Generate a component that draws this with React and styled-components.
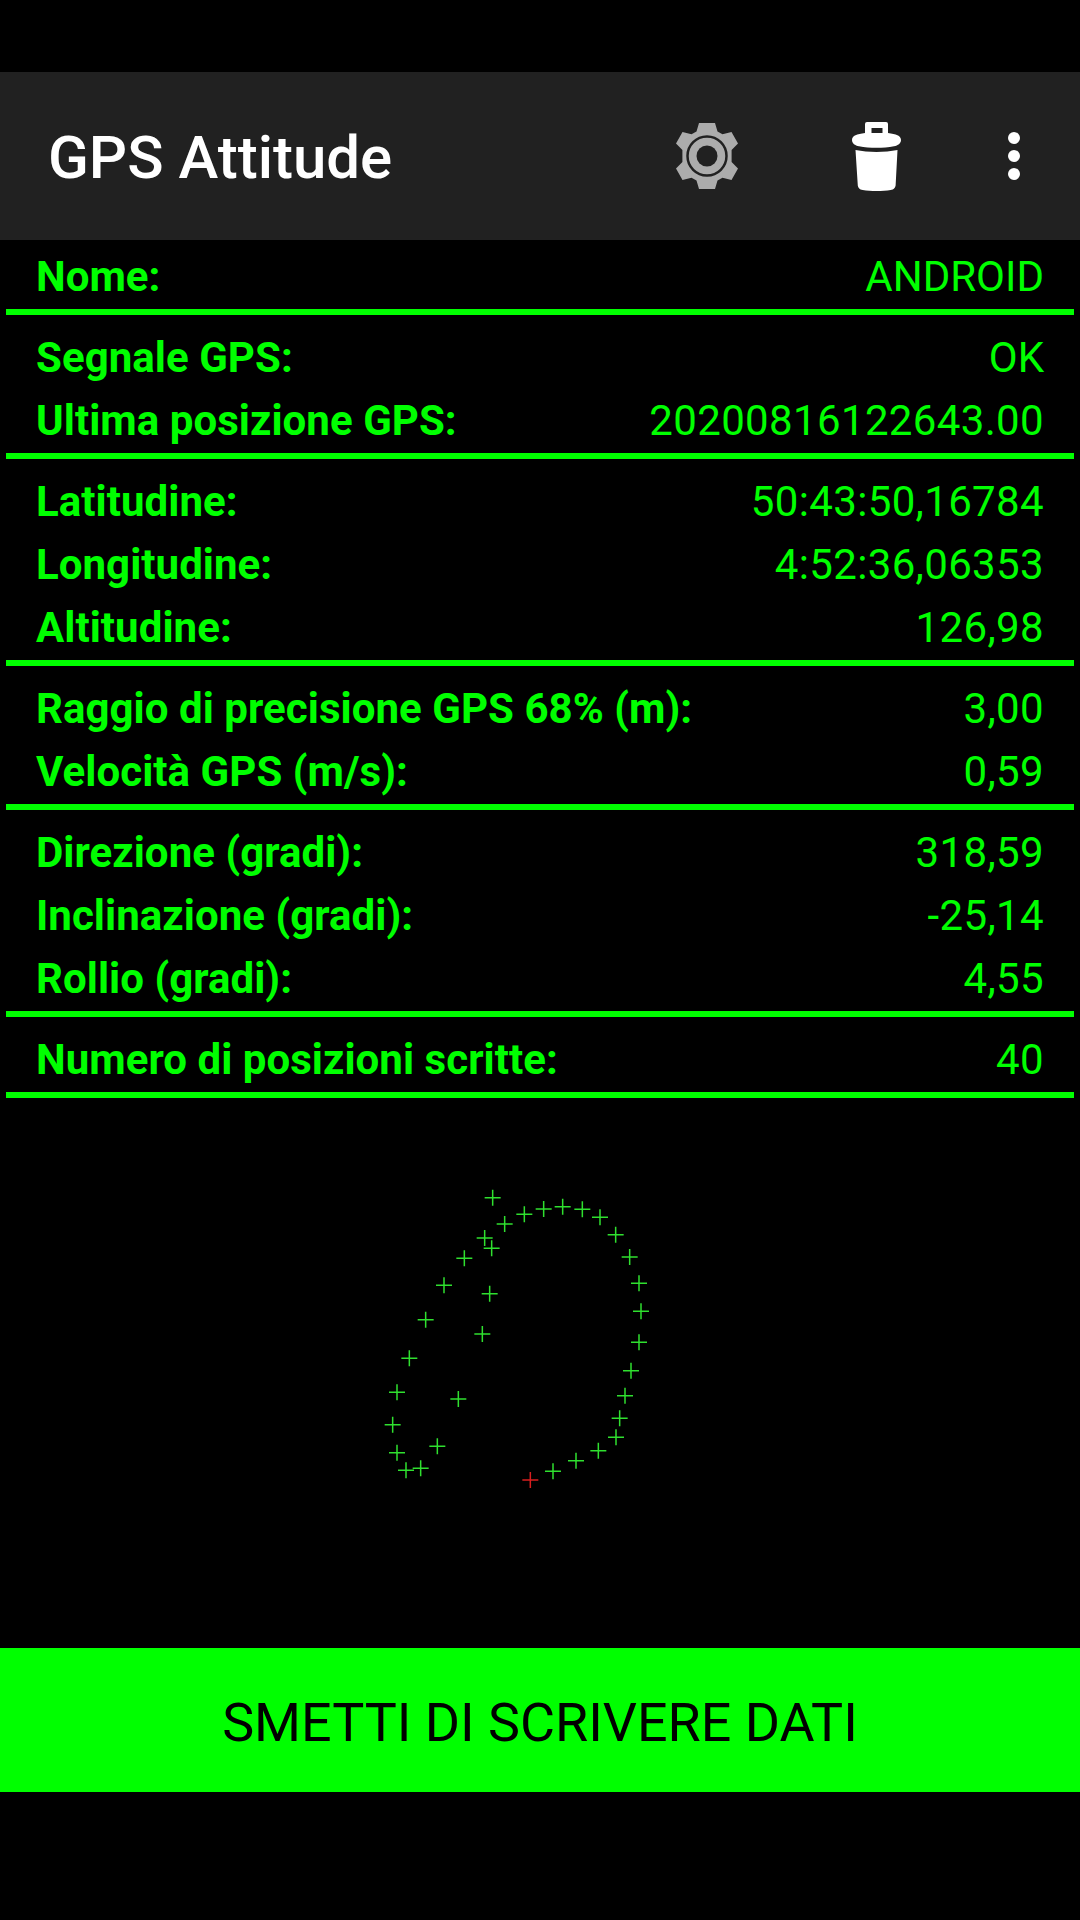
import React from 'react';
import styled, { createGlobalStyle } from 'styled-components';

const Global = createGlobalStyle`
  html, body { margin: 0; padding: 0; background: #000; }
  body { font-family: Roboto, "Liberation Sans", sans-serif; }
`;
const Screen = styled.div`
  width: 1080px; height: 1920px; background: #000; display: flex; flex-direction: column; overflow: hidden; padding-top: 72px; box-sizing: border-box;
`;
const AppBar = styled.header`
  height: 168px; background: #212121; display: flex; align-items: center; flex: none; position: relative;
`;
const Title = styled.h1`
  margin: 3px 0 0 48px; flex: 1; font-size: 60px; font-weight: 500; color: #fff; line-height: 1;
`;
const IconSlot = styled.div`
  width: ${p => p.$w}px; display: flex; justify-content: center; align-items: center; flex: none;
`;
const Table = styled.section`
  padding: 0 6px; flex: none;
`;
const Group = styled.div`
  padding-top: ${p => p.$first ? 6 : 12}px; border-bottom: 6px solid #00ff00;
`;
const Row = styled.div`
  height: 63px; box-sizing: border-box; padding: 0 30px 2px; display: flex; justify-content: space-between; align-items: center; font-size: 42px; color: #00ff00;
`;
const Label = styled.span` font-weight: 700; letter-spacing: 0.05px; `;
const Value = styled.span` font-weight: 400; letter-spacing: ${p => p.$numeric ? '0.35px' : '0'}; `;
const Canvas = styled.div`
  flex: 1; display: flex; justify-content: center; align-items: flex-start; padding: 72px 40px 0 0;
`;
const Action = styled.button`
  flex: none; height: 144px; margin: 0 0 128px; border: 0; background: #00ff00; color: #000; font: 400 53.8px Roboto, sans-serif; padding: 4px 0 0;
`;

const pts = [[368,83],[404,162],[463,133],[521,117],[578,110],[637,118],[690,142],[737,194],[779,261],[807,340],[813,424],[807,517],[783,602],[765,677],[749,745],[738,802],[685,842],[618,872],[549,904],[344,204],[365,235],[283,265],[222,346],[167,449],[118,565],[81,667],[68,764],[81,848],[108,901],[152,895],[202,829],[265,687],[337,492],[359,371]];

const Cross = ({ x, y, c }) => (
  <path d={`M${x / 3 - 8} ${y / 3}h16M${x / 3} ${y / 3 - 8}v16`} stroke={c} strokeWidth="1.5" fill="none" />
);

const groups = [
  [['Nome:', 'ANDROID']],
  [['Segnale GPS:', 'OK'], ['Ultima posizione GPS:', '20200816122643.00']],
  [['Latitudine:', '50:43:50,16784'], ['Longitudine:', '4:52:36,06353'], ['Altitudine:', '126,98']],
  [['Raggio di precisione GPS 68% (m):', '3,00'], ['Velocità GPS (m/s):', '0,59']],
  [['Direzione (gradi):', '318,59'], ['Inclinazione (gradi):', '-25,14'], ['Rollio (gradi):', '4,55']],
  [['Numero di posizioni scritte:', '40']],
];

export default function App() {
  return (
    <Screen>
      <Global />
      <AppBar>
        <Title>GPS Attitude</Title>
        <IconSlot $w={196}>
          <svg width="62" height="66" viewBox="0 0 62 66">
            <path fill="#acacac" d="M23 0h16l2.500 8.500 5 2.800 9-2.300 6.500 11.500-6.400 6.500v12l6.400 6.500-6.500 11.500-9-2.300-5 2.800L39 66H23l-2.500-8.500-5-2.800-9 2.300L0 45.500 6.400 39V27L0 20.500 6.500 9l9 2.300 5-2.800z" />
            <circle cx="31" cy="33" r="19.500" fill="none" stroke="#212121" strokeWidth="2.500" />
            <circle cx="31" cy="33" r="10.500" fill="#212121" />
          </svg>
        </IconSlot>
        <IconSlot $w={143}>
          <svg width="49" height="69" viewBox="0 0 49 69">
            <path fill="#fff" fillRule="evenodd" d="M16 0h18a2 2 0 0 1 2 2v9c8 1 13 2.500 13 7 0 3.500-3 5.500-7 6.200-11 2-24 2-35 0-4-.7-7-2.700-7-6.200 0-4.500 5-6 13-7V2a2 2 0 0 1 2-2zm3.500 6v5h11V6z" />
            <path fill="#fff" d="M3.500 28c13 2.500 29 2.500 42 0l-1.800 34c0 4-2 5.500-5 6-8 1.300-20 1.300-28 0-3-.5-5-2-5-6z" />
          </svg>
        </IconSlot>
        <IconSlot $w={132}>
          <svg width="12" height="48" viewBox="0 0 12 48">
            <circle cx="6" cy="6" r="6" fill="#fff" /><circle cx="6" cy="24" r="6" fill="#fff" /><circle cx="6" cy="42" r="6" fill="#fff" />
          </svg>
        </IconSlot>
      </AppBar>
      <Table>
        {groups.map((g, i) => (
          <Group key={i} $first={i === 0}>
            {g.map(([l, v]) => (
              <Row key={l}><Label>{l}</Label><Value $numeric={/\d/.test(v)}>{v}</Value></Row>
            ))}
          </Group>
        ))}
      </Table>
      <Canvas>
        <svg width="300" height="320" viewBox="0 0 300 320">
          {pts.map(([x, y], i) => <Cross key={i} x={x} y={y} c="#2fe02f" />)}
          <Cross x={481} y={930} c="#d81e1e" />
        </svg>
      </Canvas>
      <Action>SMETTI DI SCRIVERE DATI</Action>
    </Screen>
  );
}
